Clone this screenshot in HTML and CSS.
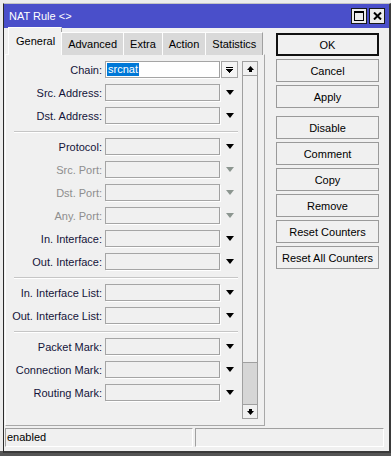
FILE: index.html
```html
<!DOCTYPE html>
<html lang="en">
<head>
    <meta charset="UTF-8">
    <meta name="viewport" content="width=device-width, initial-scale=1.0">
    <title>NAT Rule</title>
    <link rel="stylesheet" href="styles.css">
</head>
<body>
    <div class="window">
        <div class="titlebar">
            <span class="title">NAT Rule &lt;&gt;</span>
            <div class="title-buttons">
                <span class="title-btn">
                    <svg width="10" height="10" viewBox="0 0 10 10"><path d="M0.5 0.5h9v9h-9z M0.5 1.5h9" fill="none" stroke="#000" stroke-width="1" shape-rendering="crispEdges"/><rect x="0" y="0" width="10" height="2" fill="#000"/></svg>
                </span>
                <span class="title-btn">
                    <svg width="9" height="8" viewBox="0 0 9 8"><path d="M1 0.5L8 7.5M8 0.5L1 7.5" stroke="#000" stroke-width="2"/></svg>
                </span>
            </div>
        </div>

        <div class="main">
            <div class="left">
                <div class="tabs">
                    <div class="tab active">General</div>
                    <div class="tab">Advanced</div>
                    <div class="tab">Extra</div>
                    <div class="tab">Action</div>
                    <div class="tab">Statistics</div>
                </div>
                <div class="panel">
                    <div class="form">
                        <div class="row">
                            <label class="label">Chain:</label>
                            <div class="field white"><span class="selected">srcnat</span></div>
                            <span class="drop-btn">
                                <svg width="7" height="6" viewBox="0 0 7 6" shape-rendering="crispEdges"><rect x="0" y="0" width="7" height="1" fill="#000"/><polygon points="0,2 7,2 3.5,6" fill="#000"/></svg>
                            </span>
                        </div>
                        <div class="row">
                            <label class="label">Src. Address:</label>
                            <div class="field"></div>
                            <span class="arrow"></span>
                        </div>
                        <div class="row">
                            <label class="label">Dst. Address:</label>
                            <div class="field"></div>
                            <span class="arrow"></span>
                        </div>
                        <div class="separator"></div>
                        <div class="row">
                            <label class="label">Protocol:</label>
                            <div class="field"></div>
                            <span class="arrow"></span>
                        </div>
                        <div class="row disabled">
                            <label class="label">Src. Port:</label>
                            <div class="field"></div>
                            <span class="arrow"></span>
                        </div>
                        <div class="row disabled">
                            <label class="label">Dst. Port:</label>
                            <div class="field"></div>
                            <span class="arrow"></span>
                        </div>
                        <div class="row disabled">
                            <label class="label">Any. Port:</label>
                            <div class="field"></div>
                            <span class="arrow"></span>
                        </div>
                        <div class="row">
                            <label class="label">In. Interface:</label>
                            <div class="field"></div>
                            <span class="arrow"></span>
                        </div>
                        <div class="row">
                            <label class="label">Out. Interface:</label>
                            <div class="field"></div>
                            <span class="arrow"></span>
                        </div>
                        <div class="separator"></div>
                        <div class="row">
                            <label class="label">In. Interface List:</label>
                            <div class="field"></div>
                            <span class="arrow"></span>
                        </div>
                        <div class="row">
                            <label class="label">Out. Interface List:</label>
                            <div class="field"></div>
                            <span class="arrow"></span>
                        </div>
                        <div class="separator"></div>
                        <div class="row">
                            <label class="label">Packet Mark:</label>
                            <div class="field"></div>
                            <span class="arrow"></span>
                        </div>
                        <div class="row">
                            <label class="label">Connection Mark:</label>
                            <div class="field"></div>
                            <span class="arrow"></span>
                        </div>
                        <div class="row">
                            <label class="label">Routing Mark:</label>
                            <div class="field"></div>
                            <span class="arrow"></span>
                        </div>
                    </div>
                    <div class="scrollbar">
                        <div class="scroll-btn">
                            <svg width="7" height="6" viewBox="0 0 7 6"><polygon points="3.5,0 7,4 0,4" fill="#000"/><rect x="2" y="4" width="3" height="2" fill="#000"/></svg>
                        </div>
                        <div class="track"><div class="thumb"></div></div>
                        <div class="scroll-btn down">
                            <svg width="7" height="6" viewBox="0 0 7 6"><rect x="2" y="0" width="3" height="2" fill="#000"/><polygon points="0,2 7,2 3.5,6" fill="#000"/></svg>
                        </div>
                    </div>
                </div>
            </div>

            <div class="buttons">
                <button class="btn default">OK</button>
                <button class="btn">Cancel</button>
                <button class="btn">Apply</button>
                <button class="btn group">Disable</button>
                <button class="btn">Comment</button>
                <button class="btn">Copy</button>
                <button class="btn">Remove</button>
                <button class="btn">Reset Counters</button>
                <button class="btn">Reset All Counters</button>
            </div>
        </div>

        <div class="statusbar">
            <div class="status-cell">enabled</div>
            <div class="status-cell wide"></div>
        </div>
    </div>
</body>
</html>
```

FILE: styles.css
```css
* {
    margin: 0;
    padding: 0;
    box-sizing: border-box;
}
body {
    font-family: "Liberation Sans", Arial, sans-serif;
    font-size: 11px;
    color: #111;
    background: linear-gradient(to bottom, #ececec 451px, #555 451px);
    height: 456px;
    padding: 3px 0 0 3px;
    overflow: hidden;
}
.window {
    width: 388px;
    height: 450px;
    background: #f0f0f0;
    border-left: 1px solid #2a2a2a;
    border-top: 1px solid #c4c4c4;
    border-right: 2px solid #3a3a3a;
    border-bottom: 2px solid #3a3a3a;
    display: flex;
    flex-direction: column;
}
.titlebar {
    height: 24px;
    background: #4a4fca;
    color: #fff;
    display: flex;
    align-items: center;
    justify-content: space-between;
    padding: 0 4px 0 5px;
}
.title {
    font-size: 11px;
}
.title-buttons {
    display: flex;
    gap: 2px;
}
.title-btn {
    width: 16px;
    height: 16px;
    background: #ececec;
    border: 1px solid #1a1a1a;
    display: flex;
    align-items: center;
    justify-content: center;
}
.main {
    display: flex;
}
.left {
    padding-left: 1px;
}
.tabs {
    display: flex;
    height: 27px;
    padding-left: 3px;
    align-items: flex-end;
    position: relative;
    z-index: 1;
    margin-bottom: -1px;
}
.tab {
    height: 23px;
    line-height: 22px;
    padding: 0 6px;
    background: #d9d9d9;
    border-left: 1px solid #fdfdfd;
    border-top: 1px solid #fdfdfd;
    color: #000;
}
.tab.active {
    height: 28px;
    line-height: 26px;
    padding: 0 6px 0 7px;
    background: #f0f0f0;
    border-right: 1px solid #a0a0a0;
    margin-right: -1px;
}
.tab:last-child {
    border-right: 1px solid #a0a0a0;
}
.panel {
    width: 260px;
    height: 372px;
    border: 1px solid #a8a8a8;
    border-top-color: #fcfcfc;
    border-left-color: #fcfcfc;
    display: flex;
    padding: 6px 6px 6px 0;
}
.form {
    width: 232px;
    display: flex;
    flex-direction: column;
    gap: 6px;
}
.row {
    display: flex;
    height: 17px;
    align-items: center;
}
.label {
    width: 96px;
    text-align: right;
    color: #14143a;
    white-space: nowrap;
}
.disabled .label {
    color: #8e8e8e;
}
.field {
    width: 115px;
    height: 17px;
    margin-left: 3px;
    border: 1px solid #a5a5a5;
    border-right-color: #a0a0a0;
    background: #f0f0f0;
    box-shadow: 1px 1px 0 #fff;
    padding: 1px;
}
.field.white {
    background: #fff;
}
.selected {
    display: inline-block;
    background: #0078d7;
    color: #fff;
    line-height: 13px;
    padding: 0 1px;
}
.arrow,
.drop-btn {
    width: 17px;
    height: 17px;
    margin-left: 1px;
    display: flex;
    align-items: center;
    justify-content: center;
}
.arrow::before {
    content: "";
    border-left: 4px solid transparent;
    border-right: 4px solid transparent;
    border-top: 5px solid #000;
}
.disabled .arrow::before {
    border-top-color: #8c9690;
}
.drop-btn {
    border: 1px solid #a5a5a5;
    background: #f4f4f4;
}
.separator {
    margin: 1px 0 -1px 8px;
    height: 2px;
    background: #c6c6c6;
    border-bottom: 1px solid #fff;
}
.scrollbar {
    width: 16px;
    margin-left: 4px;
    border: 1px solid #a0a0a0;
    display: flex;
    flex-direction: column;
}
.scroll-btn {
    height: 14px;
    display: flex;
    align-items: center;
    justify-content: center;
    border-bottom: 1px solid #a0a0a0;
}
.scroll-btn.down {
    border-bottom: none;
    border-top: 1px solid #a0a0a0;
}
.track {
    flex: 1;
    display: flex;
    flex-direction: column;
    justify-content: flex-end;
}
.thumb {
    height: 42px;
    background: #d6d6d6;
    border-top: 1px solid #a0a0a0;
}
.buttons {
    margin: 5px 0 0 11px;
    display: flex;
    flex-direction: column;
    gap: 3px;
}
.btn {
    width: 103px;
    height: 23px;
    font-family: inherit;
    font-size: 11px;
    color: #000;
    background: #f0f0f0;
    border: 1px solid #9a9a9a;
}
.btn.default {
    border: 2px solid #111;
}
.btn.group {
    margin-top: 5px;
}
.statusbar {
    display: flex;
    gap: 2px;
    margin-top: 2px;
    padding-left: 1px;
}
.status-cell {
    width: 188px;
    height: 19px;
    line-height: 17px;
    padding-left: 1px;
    border: 1px solid #a0a0a0;
    border-right-color: #fff;
    border-bottom-color: #fff;
    color: #000;
}
.status-cell.wide {
    width: 189px;
}
```
